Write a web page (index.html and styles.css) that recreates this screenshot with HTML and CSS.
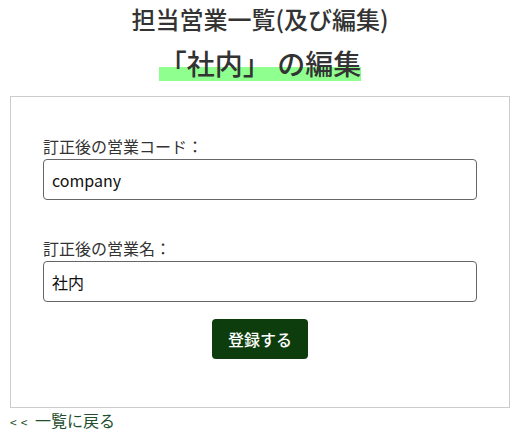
FILE: index.html
```html
<!DOCTYPE html>
<html lang="ja">
<head>
<meta charset="utf-8">
<title>担当営業一覧(及び編集)</title>
<link rel="stylesheet" href="styles.css">
</head>
<body>
<h1 class="page-title">担当営業一覧(及び編集)</h1>
<h2 class="sub-title"><span class="marker">「社内」 の編集</span></h2>
<form class="edit-box">
  <div class="field">
    <label class="field-label" for="code">訂正後の営業コード：</label>
    <input class="field-input" id="code" type="text" value="company">
  </div>
  <div class="field">
    <label class="field-label" for="name">訂正後の営業名：</label>
    <input class="field-input" id="name" type="text" value="社内">
  </div>
  <div class="actions">
    <button class="submit-btn" type="button">登録する</button>
  </div>
</form>
<a class="back-link" href="#"><span class="arrows">&lt;&lt;</span> 一覧に戻る</a>
</body>
</html>
```
FILE: styles.css
```css
html, body {
  margin: 0;
  padding: 0;
  background: #fff;
}
body {
  padding: 0 4px 0 10px;
  font-family: "Noto Sans CJK JP", "Noto Sans", sans-serif;
  color: #333;
}
.page-title {
  margin: 0;
  text-align: center;
  font-size: 24px;
  font-weight: 500;
  line-height: 38px;
  color: #333;
}
.sub-title {
  margin: 4px 0 0;
  text-align: center;
  font-size: 28px;
  font-weight: 500;
  line-height: 42px;
  color: #333;
}
.marker {
  display: inline-block;
  line-height: 36px;
  background: linear-gradient(transparent 62%, #8fff8f 62%);
}
.edit-box {
  box-sizing: border-box;
  width: 500px;
  margin-top: 12px;
  border: 1px solid #ccc;
  padding: 38px 32px 48px;
}
.field {
  display: flex;
  flex-direction: column;
  gap: 2px;
}
.field + .field {
  margin-top: 37px;
}
.field-label {
  font-size: 16px;
  line-height: 22px;
  color: #333;
}
.field-input {
  box-sizing: border-box;
  height: 41px;
  width: 100%;
  margin: 0;
  border: 1px solid #666;
  border-radius: 4px;
  padding: 0 8px;
  font-family: "Noto Sans CJK JP", "Noto Sans", sans-serif;
  font-size: 16px;
  color: #111;
  background: #fff;
}
.actions {
  display: flex;
  justify-content: center;
  margin-top: 17px;
}
.submit-btn {
  width: 96px;
  height: 40px;
  border: none;
  border-radius: 4px;
  background: #0d3d0d;
  color: #fff;
  font-family: "Noto Sans CJK JP", "Noto Sans", sans-serif;
  font-size: 16px;
  font-weight: 500;
}
.back-link {
  display: block;
  font-size: 16px;
  line-height: 24px;
  color: #1f4f2f;
  text-decoration: none;
}
.arrows {
  font-size: 12px;
  letter-spacing: 4px;
}
```
